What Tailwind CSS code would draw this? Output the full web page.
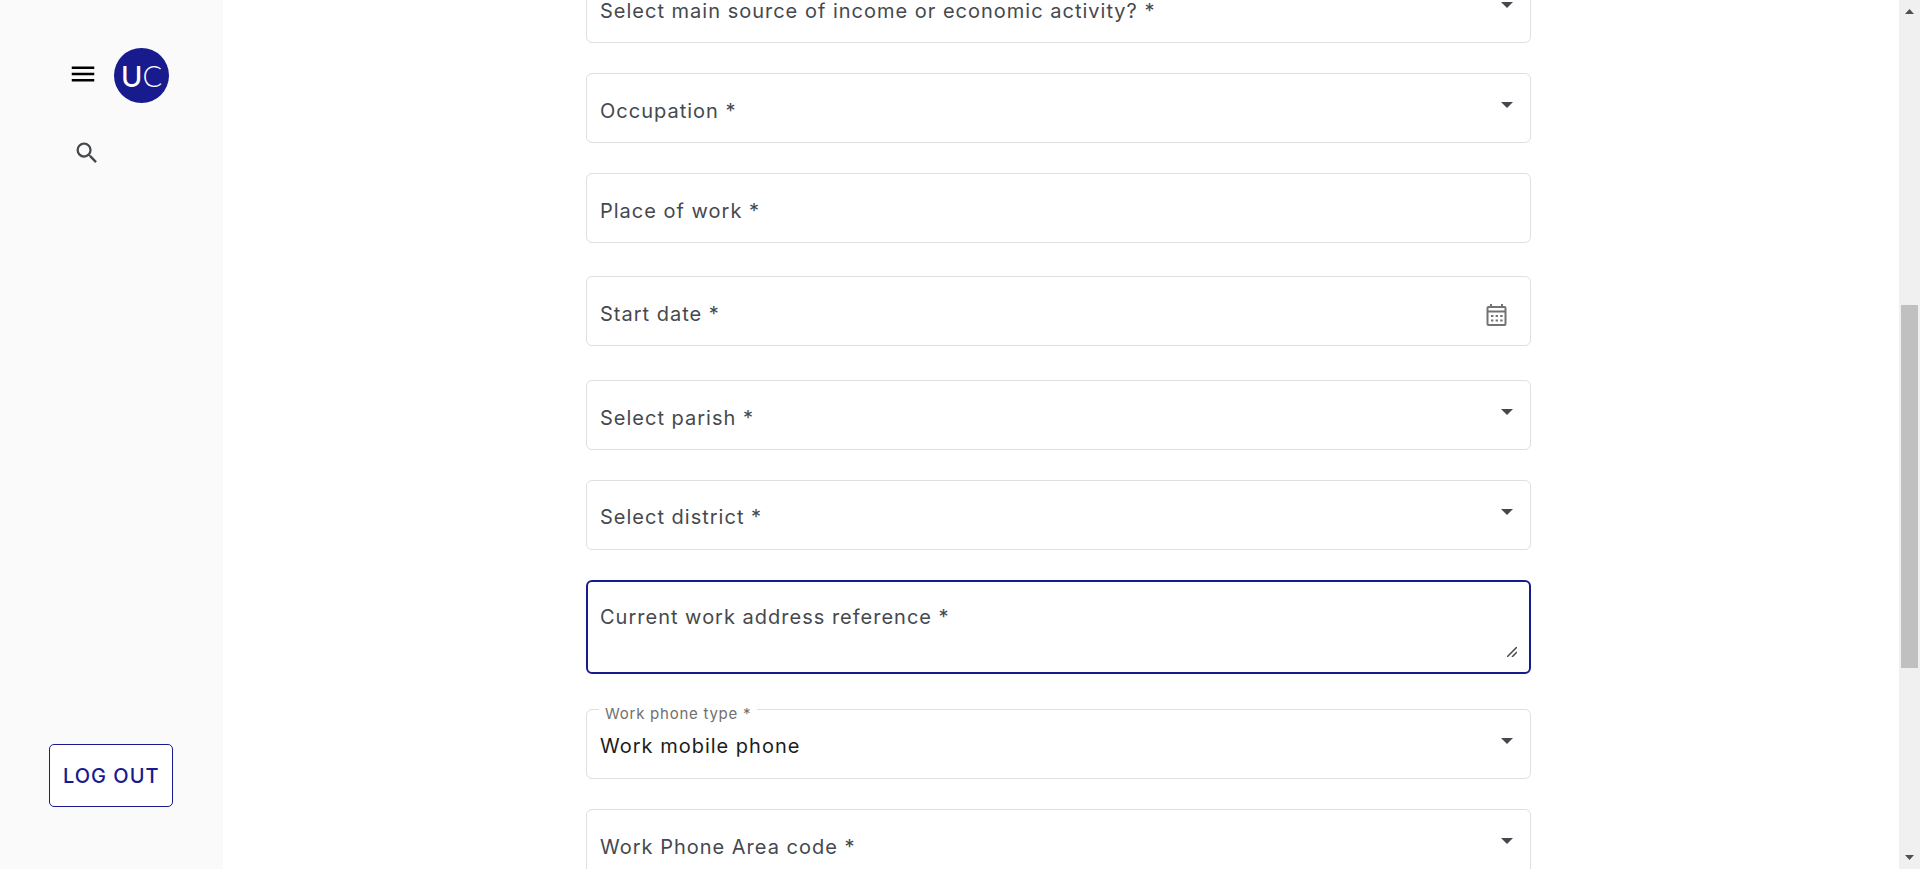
<!DOCTYPE html>
<html lang="en">
<head>
<meta charset="utf-8">
<meta name="viewport" content="width=device-width, initial-scale=1">
<title>Work information</title>
<script src="https://cdn.jsdelivr.net/npm/@tailwindcss/browser@4"></script>
</head>
<body class="flex h-screen overflow-hidden bg-white font-[Inter,sans-serif] text-xl leading-6 tracking-wider text-[#45494e]">

<aside class="flex w-[223px] shrink-0 flex-col bg-[#fafafa] pt-12 pb-[62px]">
  <div class="flex items-center gap-4 pl-[68px]">
    <button type="button" aria-label="Menu" class="pb-1 text-black">
      <svg class="block size-[30px]" viewBox="0 0 24 24" fill="currentColor"><path d="M3 18h18v-2H3v2zm0-5h18v-2H3v2zm0-7v2h18V6H3z"/></svg>
    </button>
    <a href="#" class="flex size-[55px] items-center justify-center rounded-full bg-[#181b8e] font-[Lato,sans-serif] text-[29px] leading-none tracking-normal text-white"><span class="font-medium">U</span><span class="font-light">C</span></a>
  </div>
  <button type="button" aria-label="Search" class="mt-9 ml-[73px] self-start">
    <svg class="block size-7" viewBox="0 0 24 24" fill="currentColor"><path d="M15.5 14h-.79l-.28-.27A6.471 6.471 0 0 0 16 9.500 6.500 6.500 0 1 0 9.500 16c1.610 0 3.090-.59 4.230-1.570l.27.28v.79l5 4.990L20.490 19l-4.990-5zm-6 0C7.010 14 5 11.990 5 9.500S7.010 5 9.500 5 14 7.010 14 9.500 11.990 14 9.500 14z"/></svg>
  </button>
  <button type="button" class="mt-auto ml-[49px] h-[63px] self-start rounded-[5px] border border-[#181b8e] bg-white pr-3 pl-[13px] font-medium text-[#181b8e]">LOG OUT</button>
</aside>

<main class="min-w-0 flex-1 overflow-hidden">
  <form class="-mt-[27px] flex flex-col pr-[5px]">
    <div class="mx-auto grid h-[70px] w-full max-w-[945px] shrink-0 items-center rounded-md border border-[#dfdfdf]">
      <select id="income" class="col-start-1 row-start-1 h-full w-full appearance-none px-[13px] pt-[6px] outline-none"><option></option></select>
      <label for="income" class="pointer-events-none col-start-1 row-start-1 px-[13px] pt-[6px]">Select main source of income or economic activity? *</label>
      <svg class="pointer-events-none col-start-1 row-start-1 mr-[17px] mb-[6px] h-[6px] w-3 justify-self-end" viewBox="0 0 12 6" fill="currentColor"><path d="M0 0h12L6 6z"/></svg>
    </div>
    <div class="mx-auto mt-[30px] grid h-[70px] w-full max-w-[945px] shrink-0 items-center rounded-md border border-[#dfdfdf]">
      <select id="occupation" class="col-start-1 row-start-1 h-full w-full appearance-none px-[13px] pt-[6px] outline-none"><option></option></select>
      <label for="occupation" class="pointer-events-none col-start-1 row-start-1 px-[13px] pt-[6px]">Occupation *</label>
      <svg class="pointer-events-none col-start-1 row-start-1 mr-[17px] mb-[6px] h-[6px] w-3 justify-self-end" viewBox="0 0 12 6" fill="currentColor"><path d="M0 0h12L6 6z"/></svg>
    </div>
    <div class="mx-auto mt-[30px] grid h-[70px] w-full max-w-[945px] shrink-0 items-center rounded-md border border-[#dfdfdf]">
      <input id="workplace" type="text" class="col-start-1 row-start-1 h-full w-full px-[13px] pt-[6px] outline-none">
      <label for="workplace" class="pointer-events-none col-start-1 row-start-1 px-[13px] pt-[6px]">Place of work *</label>
    </div>
    <div class="mx-auto mt-[33px] grid h-[70px] w-full max-w-[945px] shrink-0 items-center rounded-md border border-[#dfdfdf]">
      <input id="start" type="text" class="col-start-1 row-start-1 h-full w-full px-[13px] pt-[6px] outline-none">
      <label for="start" class="pointer-events-none col-start-1 row-start-1 px-[13px] pt-[6px]">Start date *</label>
      <button type="button" aria-label="Open calendar" class="col-start-1 row-start-1 mt-2 mr-[23px] justify-self-end text-[#737373]">
        <svg class="block h-[22px] w-[21px]" viewBox="0 0 21 22" fill="none" stroke="currentColor" stroke-width="2"><rect x="1.500" y="3" width="18" height="18" rx="1"/><path d="M2 7.500h17M5 0v3M16 0v3"/><path stroke-width="2.200" stroke-dasharray="2.400 2.200" d="M5 12h12M5 16.500h12"/></svg>
      </button>
    </div>
    <div class="mx-auto mt-[34px] grid h-[70px] w-full max-w-[945px] shrink-0 items-center rounded-md border border-[#dfdfdf]">
      <select id="parish" class="col-start-1 row-start-1 h-full w-full appearance-none px-[13px] pt-[6px] outline-none"><option></option></select>
      <label for="parish" class="pointer-events-none col-start-1 row-start-1 px-[13px] pt-[6px]">Select parish *</label>
      <svg class="pointer-events-none col-start-1 row-start-1 mr-[17px] mb-[6px] h-[6px] w-3 justify-self-end" viewBox="0 0 12 6" fill="currentColor"><path d="M0 0h12L6 6z"/></svg>
    </div>
    <div class="mx-auto mt-[30px] grid h-[70px] w-full max-w-[945px] shrink-0 items-center rounded-md border border-[#dfdfdf]">
      <select id="district" class="col-start-1 row-start-1 h-full w-full appearance-none px-[13px] pt-[6px] outline-none"><option></option></select>
      <label for="district" class="pointer-events-none col-start-1 row-start-1 px-[13px] pt-1">Select district *</label>
      <svg class="pointer-events-none col-start-1 row-start-1 mr-[17px] mb-[6px] h-[6px] w-3 justify-self-end" viewBox="0 0 12 6" fill="currentColor"><path d="M0 0h12L6 6z"/></svg>
    </div>
    <div class="mx-auto mt-[30px] grid h-[94px] w-full max-w-[945px] shrink-0 rounded-md border-2 border-[#181b8e]">
      <textarea id="address" class="col-start-1 row-start-1 h-full w-full resize-none px-3 pt-[23px] outline-none"></textarea>
      <label for="address" class="pointer-events-none col-start-1 row-start-1 px-3 pt-[23px]">Current work address reference *</label>
      <svg class="pointer-events-none col-start-1 row-start-1 mr-3 mb-[15px] size-[10px] self-end justify-self-end" viewBox="0 0 10 10" stroke="currentColor" stroke-width="1.500"><path d="M0 10L10 0M5 10l5-5"/></svg>
    </div>
    <div class="relative mx-auto mt-[35px] grid h-[70px] w-full max-w-[945px] shrink-0 items-center rounded-md border border-[#dfdfdf]">
      <label for="phonetype" class="absolute -top-[6px] left-3 z-10 bg-white px-[6px] text-[15px] leading-5 tracking-wider text-[#6f6f6f]">Work phone type *</label>
      <select id="phonetype" class="col-start-1 row-start-1 h-full w-full appearance-none px-[13px] pt-1 text-[#1c1c1c] outline-none"><option>Work mobile phone</option></select>
      <svg class="pointer-events-none col-start-1 row-start-1 mr-[17px] mb-[6px] h-[6px] w-3 justify-self-end" viewBox="0 0 12 6" fill="currentColor"><path d="M0 0h12L6 6z"/></svg>
    </div>
    <div class="mx-auto mt-[30px] grid h-[70px] w-full max-w-[945px] shrink-0 items-center rounded-md border border-[#dfdfdf]">
      <select id="area" class="col-start-1 row-start-1 h-full w-full appearance-none px-[13px] pt-[6px] outline-none"><option></option></select>
      <label for="area" class="pointer-events-none col-start-1 row-start-1 px-[13px] pt-[6px]">Work Phone Area code *</label>
      <svg class="pointer-events-none col-start-1 row-start-1 mr-[17px] mb-[6px] h-[6px] w-3 justify-self-end" viewBox="0 0 12 6" fill="currentColor"><path d="M0 0h12L6 6z"/></svg>
    </div>
  </form>
</main>

<!-- Page scroll track -->
<div class="flex w-[21px] shrink-0 flex-col items-center bg-[#f0f0f0] pt-[9px] pb-[9px] text-[#505050]">
  <svg class="h-[5px] w-[9px]" viewBox="0 0 9 5" fill="currentColor"><path d="M0 5h9L4.500 0z"/></svg>
  <div class="mt-[291px] h-[363px] w-[17px] bg-[#c0c0c0]"></div>
  <svg class="mt-auto h-[5px] w-[9px]" viewBox="0 0 9 5" fill="currentColor"><path d="M0 0h9L4.500 5z"/></svg>
</div>

</body>
</html>
